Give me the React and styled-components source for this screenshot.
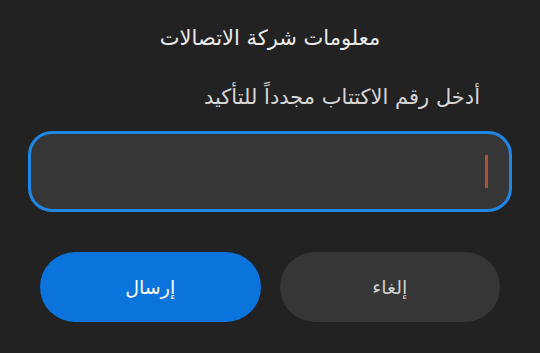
import styled, { createGlobalStyle } from "styled-components";

const GlobalStyle = createGlobalStyle`
    html, body {
        margin: 0;
        padding: 0;
        background: #222222;
    }
`;

const Dialog = styled.div`
    width: 540px;
    height: 353px;
    box-sizing: border-box;
    background: #222222;
    direction: rtl;
    font-family: "DejaVu Sans", "Noto Sans", sans-serif;
    display: flex;
    flex-direction: column;
    padding: 22px 28px 0 28px;
`;

const Title = styled.h1`
    margin: 0;
    font-size: 21px;
    font-weight: 400;
    color: #ebebeb;
    text-align: center;
    line-height: 32px;
`;

const Message = styled.p`
    margin: 28px 32px 0 0;
    font-size: 21px;
    color: #d6d6d6;
    line-height: 30px;
`;

const Field = styled.div`
    margin-top: 19px;
    height: 81px;
    box-sizing: border-box;
    border: 3px solid #1f87e6;
    border-radius: 24px;
    background: #363636;
    display: flex;
    align-items: center;
    padding-right: 21px;
`;

const Caret = styled.span`
    width: 3px;
    height: 33px;
    background: #a8533c;
`;

const Actions = styled.div`
    display: flex;
    gap: 19px;
    margin-top: 40px;
    padding: 0 12px;
`;

const Button = styled.button`
    flex: 1;
    height: 70px;
    border: none;
    border-radius: 35px;
    font-family: inherit;
    font-size: 19px;
    background: ${(props) => (props.primary ? "#0a74dc" : "#363636")};
    color: ${(props) => (props.primary ? "#ffffff" : "#cfcfcf")};
`;

function App() {
    return (
        <>
            <GlobalStyle />
            <Dialog>
                <Title>معلومات شركة الاتصالات</Title>
                <Message>أدخل رقم الاكتتاب مجدداً للتأكيد</Message>
                <Field>
                    <Caret />
                </Field>
                <Actions>
                    <Button>إلغاء</Button>
                    <Button primary>إرسال</Button>
                </Actions>
            </Dialog>
        </>
    );
}

export default App;
